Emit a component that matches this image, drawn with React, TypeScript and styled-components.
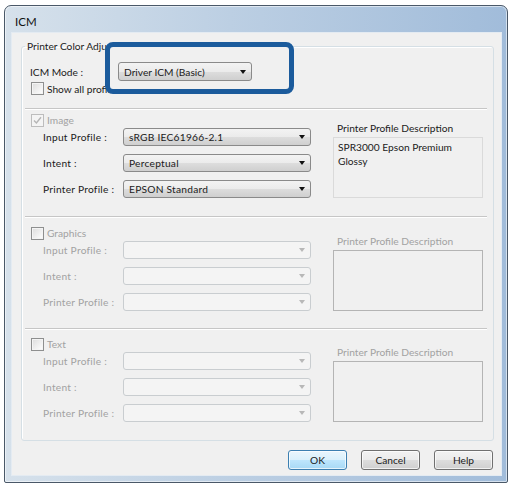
import React from 'react';
import styled, { createGlobalStyle, css } from 'styled-components';

const UI_FONT = `Lato, "Noto Sans", "Liberation Sans", sans-serif`;
const DISABLED = '#a2a2a2';

const GlobalStyle = createGlobalStyle`
  html, body {
    margin: 0;
    background: #ffffff;
  }
  body {
    padding: 5px 0 0 4px;
    font-family: ${UI_FONT};
    font-size: 10.2px;
    color: #1b1b1b;
  }
`;

const Window = styled.div`
  width: 504px;
  height: 478px;
  box-sizing: border-box;
  display: flex;
  flex-direction: column;
  border: 1px solid #4a5868;
  border-radius: 7px 7px 2px 2px;
  background: linear-gradient(90deg, #d6e1eb 0%, #bccfe3 45%, #a1bcda 100%);
  box-shadow: inset 0 0 0 1px rgba(255, 255, 255, 0.55);
  padding: 0 5px 6px 6px;
`;

const TitleBar = styled.div`
  height: 26px;
  box-sizing: border-box;
  display: flex;
  align-items: center;
  padding: 5px 0 0 4px;
  font-size: 11.5px;
  color: #111;
`;

const Client = styled.div`
  flex: 1;
  display: flex;
  flex-direction: column;
  background: #f0f0f0;
  border: 1px solid #e4ebf2;
  padding: 6px 7px 5px 9px;
`;

const Group = styled.fieldset`
  margin: 0;
  padding: 9px 0 0 0;
  border: 1px solid #d5dfe5;
  border-radius: 3px;
  box-shadow: inset 1px 1px 0 #fff;
  height: 402px;
  box-sizing: border-box;
`;

const Legend = styled.legend`
  margin-left: 3px;
  padding: 0 2px;
  line-height: 14px;
`;

const ModeRow = styled.div`
  display: flex;
  align-items: center;
  padding-left: 8px;
  height: 19px;
`;

const ModeLabel = styled.span`
  width: 88px;
`;

const ComboWrap = styled.div`
  position: relative;
`;

/* rounded callout frame drawn around the mode selector */
const Highlight = styled.div`
  position: absolute;
  top: -20px;
  left: -13px;
  right: -42px;
  bottom: -13px;
  z-index: 1;
  background: #f0f0f0;
  border: 5px solid #1b5b9c;
  border-radius: 8px;
`;

const Combo = styled.div<{ $width: number; $height?: number; $disabled?: boolean }>`
  position: relative;
  z-index: 2;
  width: ${(p) => p.$width}px;
  height: ${(p) => p.$height ?? 18}px;
  box-sizing: border-box;
  display: flex;
  align-items: center;
  padding: 0 14px 0 5px;
  border-radius: 3px;
  white-space: nowrap;
  ${(p) =>
    p.$disabled
      ? css`
          border: 1px solid #c9cdd0;
          background: #f4f4f4;
        `
      : css`
          border: 1px solid #8a8a8a;
          background: linear-gradient(#f3f3f3 0%, #ebebeb 50%, #dddddd 51%, #cfcfcf 100%);
        `}

  &::after {
    content: '';
    position: absolute;
    right: 5px;
    top: 50%;
    margin-top: -2px;
    border-left: 3.5px solid transparent;
    border-right: 3.5px solid transparent;
    border-top: 4px solid ${(p) => (p.$disabled ? '#b8b8b8' : '#111')};
  }
`;

const CheckRow = styled.label<{ $disabled?: boolean }>`
  display: flex;
  align-items: center;
  height: 16px;
  color: ${(p) => (p.$disabled ? DISABLED : 'inherit')};
`;

const Box = styled.span<{ $disabled?: boolean }>`
  width: 13px;
  height: 13px;
  box-sizing: border-box;
  margin-right: 3px;
  display: flex;
  align-items: center;
  justify-content: center;
  border: 1px solid ${(p) => (p.$disabled ? '#bdbdbd' : '#8e8f8f')};
  background: ${(p) =>
    p.$disabled ? '#f4f4f4' : 'linear-gradient(135deg, #dcdcdc, #ffffff)'};
  box-shadow: ${(p) => (p.$disabled ? 'none' : 'inset 0 0 0 1px #f4f4f4')};
`;

const ShowAll = styled.div`
  padding-left: 9px;
  height: 15px;
  display: flex;
  align-items: center;
`;

const Separator = styled.div<{ $gap?: number }>`
  margin: ${(p) => p.$gap ?? 0}px 6px 0 3px;
  border-top: 1px solid #c6c6c6;
  border-bottom: 1px solid #ffffff;
`;

const Section = styled.div<{ $top: number; $bottom: number }>`
  display: grid;
  grid-template-columns: 280px 150px;
  grid-template-areas:
    'head desc'
    'fields desc';
  column-gap: 22px;
  padding: ${(p) => p.$top}px 0 ${(p) => p.$bottom}px 9px;
`;

const Head = styled.div`
  grid-area: head;
`;

const Fields = styled.div`
  grid-area: fields;
  display: flex;
  flex-direction: column;
  gap: 8px;
  padding-left: 12px;
`;

const FieldRow = styled.div<{ $disabled?: boolean }>`
  display: grid;
  grid-template-columns: 80px 188px;
  align-items: center;
  color: ${(p) => (p.$disabled ? DISABLED : 'inherit')};
  letter-spacing: 0.25px;
`;

const Description = styled.div<{ $disabled?: boolean }>`
  grid-area: desc;
  align-self: end;
  color: ${(p) => (p.$disabled ? DISABLED : 'inherit')};
`;

const DescLabel = styled.div`
  line-height: 14px;
  padding-left: 4px;
  margin-bottom: 2px;
`;

const DescBox = styled.div<{ $disabled?: boolean }>`
  height: 61px;
  box-sizing: border-box;
  padding: 2px 4px;
  line-height: 14px;
  border: 1px solid ${(p) => (p.$disabled ? '#b4b4b4' : '#dadada')};
  background: #f0f0f0;
`;

const ButtonBar = styled.div`
  display: flex;
  justify-content: flex-end;
  gap: 14px;
  margin-top: 9px;
  padding-right: 1px;
`;

const Button = styled.button<{ $primary?: boolean }>`
  width: 59px;
  height: 20px;
  padding: 0;
  font-family: ${UI_FONT};
  font-size: 10.2px;
  color: #1b1b1b;
  border-radius: 3px;
  border: 1px solid ${(p) => (p.$primary ? '#3c7fb1' : '#707070')};
  background: ${(p) =>
    p.$primary
      ? 'linear-gradient(#eaf6fd 0%, #d9f0fc 50%, #bee6fd 51%, #a7d9f5 100%)'
      : 'linear-gradient(#f2f2f2 0%, #ebebeb 50%, #dddddd 51%, #cfcfcf 100%)'};
  box-shadow: inset 0 0 0 1px rgba(255, 255, 255, 0.7);
`;

const Check = () => (
  <svg width="9" height="9" viewBox="0 0 9 9">
    <path d="M1 4.6 L3.4 7 L8 1.2" fill="none" stroke="#b5b5b5" strokeWidth="1.4" />
  </svg>
);

interface ProfileSectionProps {
  title: string;
  values?: [string, string, string];
  description?: string;
  checked?: boolean;
  disabled?: boolean;
  top: number;
  bottom: number;
}

const ProfileSection: React.FC<ProfileSectionProps> = ({
  title,
  values,
  description,
  checked,
  disabled,
  top,
  bottom,
}) => {
  const labels = ['Input Profile :', 'Intent :', 'Printer Profile :'];
  return (
    <Section $top={top} $bottom={bottom}>
      <Head>
        <CheckRow $disabled>
          <Box $disabled={checked}>{checked && <Check />}</Box>
          {title}
        </CheckRow>
      </Head>
      <Fields>
        {labels.map((label, i) => (
          <FieldRow key={label} $disabled={disabled}>
            <span>{label}</span>
            <Combo $width={188} $disabled={disabled}>
              {values?.[i]}
            </Combo>
          </FieldRow>
        ))}
      </Fields>
      <Description $disabled={disabled}>
        <DescLabel>Printer Profile Description</DescLabel>
        <DescBox $disabled={disabled}>{description}</DescBox>
      </Description>
    </Section>
  );
};

export default function App() {
  return (
    <>
      <GlobalStyle />
      <Window>
        <TitleBar>ICM</TitleBar>
        <Client>
          <Group>
            <Legend>Printer Color Adjustment</Legend>
            <ModeRow>
              <ModeLabel>ICM Mode :</ModeLabel>
              <ComboWrap>
                <Highlight />
                <Combo $width={134} $height={19}>
                  Driver ICM (Basic)
                </Combo>
              </ComboWrap>
            </ModeRow>
            <ShowAll>
              <CheckRow>
                <Box />
                Show all profiles
              </CheckRow>
            </ShowAll>
            <Separator $gap={12} />
            <ProfileSection
              title="Image"
              checked
              values={['sRGB IEC61966-2.1', 'Perceptual', 'EPSON Standard']}
              description="SPR3000 Epson Premium Glossy"
              top={2}
              bottom={18}
            />
            <Separator />
            <ProfileSection title="Graphics" disabled top={7} bottom={17} />
            <Separator />
            <ProfileSection title="Text" disabled top={6} bottom={0} />
          </Group>
          <ButtonBar>
            <Button $primary>OK</Button>
            <Button>Cancel</Button>
            <Button>Help</Button>
          </ButtonBar>
        </Client>
      </Window>
    </>
  );
}
